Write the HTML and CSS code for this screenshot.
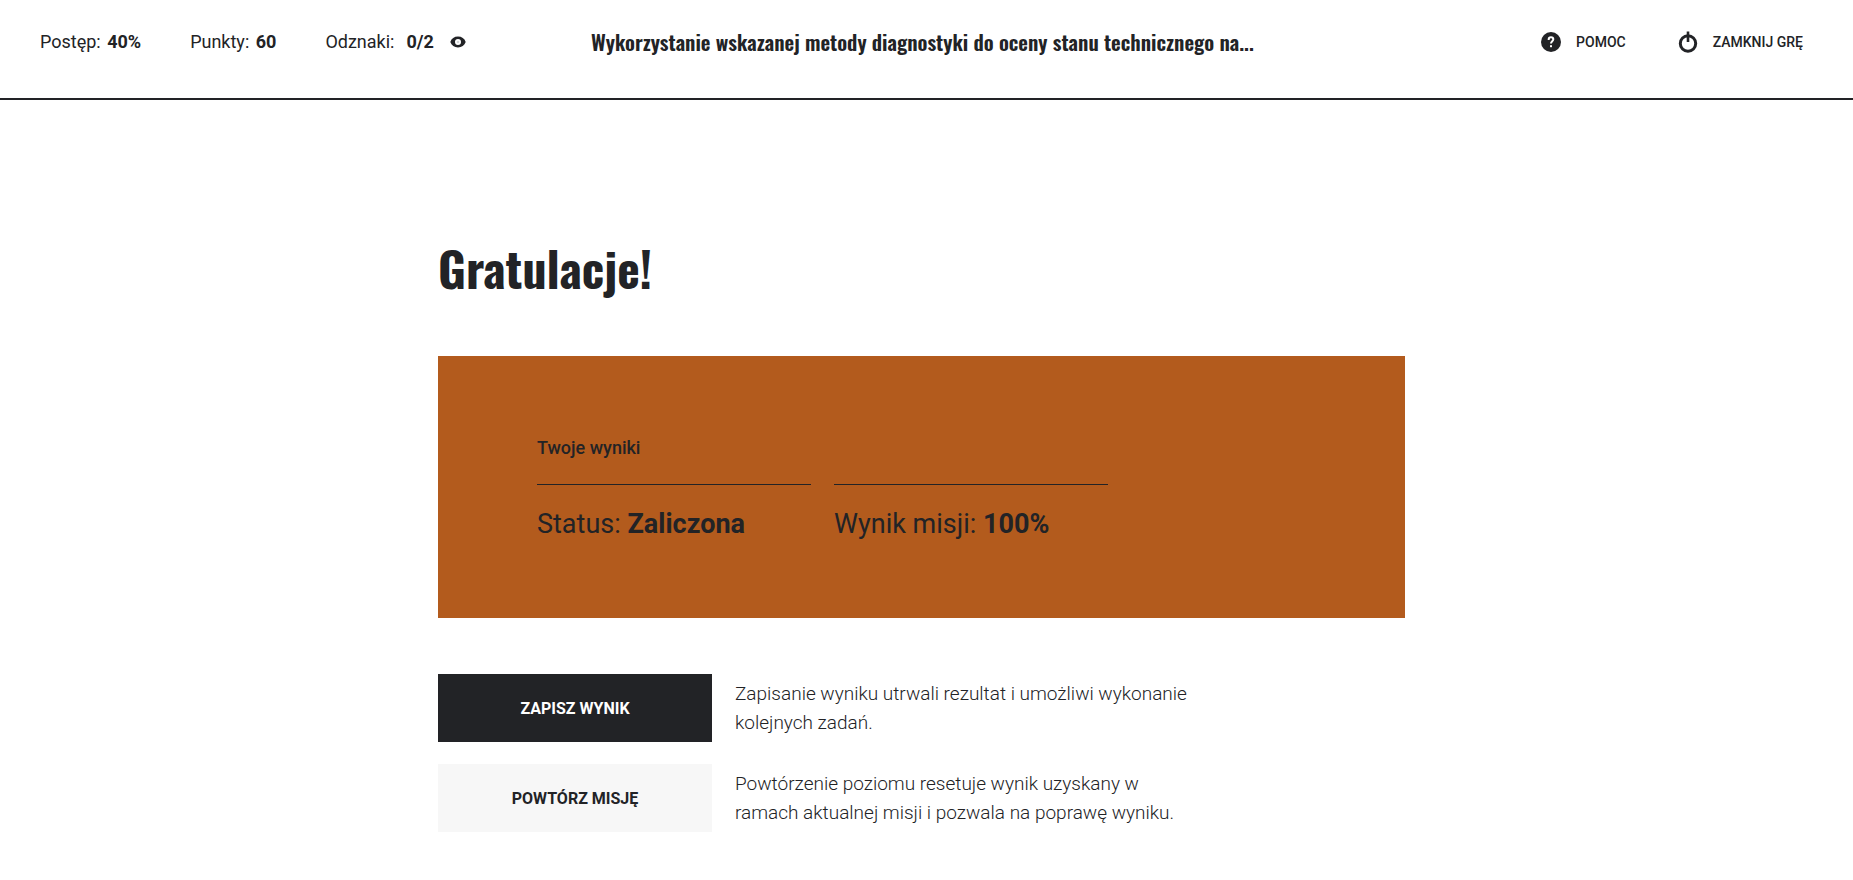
FILE: index.html
```html
<!DOCTYPE html>
<html lang="pl">
<head>
  <meta charset="UTF-8">
  <meta name="viewport" content="width=device-width, initial-scale=1.0">
  <title>Gratulacje!</title>
  <link rel="stylesheet" href="styles.css">
</head>
<body>
  <header class="top-bar">
    <ul class="stats">
      <li>Postęp: <strong>40%</strong></li>
      <li>Punkty: <strong>60</strong></li>
      <li class="badges">
        Odznaki: <strong>0/2</strong>
        <button class="icon-btn" type="button" aria-label="Pokaż odznaki">
          <svg width="16" height="12" viewBox="0 0 16 12">
            <path fill="currentColor" fill-rule="evenodd" d="M8 0.6C4.3 0.6 1.5 2.6 0.3 6c1.2 3.4 4 5.4 7.7 5.4s6.5-2 7.7-5.4C14.5 2.6 11.7 0.6 8 0.6zM8 3a3 3 0 1 1 0 6a3 3 0 1 1 0-6z"/>
            <circle cx="8" cy="6" r="1.3" fill="#d5d8da"/>
          </svg>
        </button>
      </li>
    </ul>

    <h2 class="mission-title">Wykorzystanie wskazanej metody diagnostyki do oceny stanu technicznego na...</h2>

    <nav class="actions">
      <button class="nav-btn" type="button">
        <svg width="20" height="20" viewBox="0 0 20 20">
          <circle cx="10" cy="10" r="10" fill="currentColor"/>
          <path d="M7.7 8V7.3a2.3 2.1 0 0 1 4.6 0c0 1.9-2.3 1.9-2.3 4.3" fill="none" stroke="#fff" stroke-width="2"/>
          <rect x="9" y="13.2" width="2" height="2" fill="#fff"/>
        </svg>
        POMOC
      </button>
      <button class="nav-btn" type="button">
        <svg width="20" height="22" viewBox="0 0 20 22">
          <circle cx="10" cy="12.5" r="7.7" fill="none" stroke="currentColor" stroke-width="3"/>
          <path d="M10 0.5v10.5" stroke="currentColor" stroke-width="2.6"/>
        </svg>
        ZAMKNIJ GRĘ
      </button>
    </nav>
  </header>

  <main class="content">
    <h1>Gratulacje!</h1>

    <section class="results">
      <h3>Twoje wyniki</h3>
      <div class="results-row">
        <p>Status: <strong>Zaliczona</strong></p>
        <p>Wynik misji: <strong>100%</strong></p>
      </div>
    </section>

    <div class="options">
      <div class="option">
        <button class="btn btn-dark" type="button" aria-describedby="saveInfo">ZAPISZ WYNIK</button>
        <p id="saveInfo">Zapisanie wyniku utrwali rezultat i umożliwi wykonanie kolejnych zadań.</p>
      </div>
      <div class="option">
        <button class="btn btn-light" type="button" aria-describedby="repeatInfo">POWTÓRZ MISJĘ</button>
        <p id="repeatInfo">Powtórzenie poziomu resetuje wynik uzyskany w ramach aktualnej misji i pozwala na poprawę wyniku.</p>
      </div>
    </div>
  </main>
</body>
</html>
```

FILE: styles.css
```css
* {
  box-sizing: border-box;
}

body {
  margin: 0;
  font-family: Roboto, sans-serif;
  font-size: 18px;
  color: #222326;
  background: #fff;
}

h1, h2, h3, p, ul {
  margin: 0;
  padding: 0;
}

strong {
  font-weight: 700;
}

button {
  font-family: inherit;
  color: inherit;
  border: none;
  cursor: pointer;
}

/* Top bar */
.top-bar {
  display: grid;
  grid-template-columns: 551px 1fr auto;
  align-items: center;
  padding: 24px 50px 38px 40px;
  border-bottom: 2px solid #222326;
}

.stats {
  display: flex;
  gap: 49px;
  list-style: none;
  line-height: 36px;
}

.stats strong {
  margin-left: 2px;
}

.badges {
  display: flex;
  align-items: center;
}

.badges strong {
  margin-left: 12px;
}

.icon-btn {
  display: flex;
  margin-left: 16px;
  padding: 0;
  background: none;
}

.mission-title {
  font-family: Oswald, "Roboto Condensed", Roboto, sans-serif;
  font-size: 21px;
  font-weight: 600;
  line-height: 36px;
  white-space: nowrap;
}

.actions {
  display: flex;
  gap: 52px;
}

.nav-btn {
  display: flex;
  align-items: center;
  gap: 15px;
  padding: 0;
  font-size: 14px;
  font-weight: 500;
  background: none;
}

/* Content */
.content {
  width: 977px;
  max-width: 100%;
  margin: 0 auto;
  padding: 130px 10px 32px 0;
}

h1 {
  font-family: Oswald, "Roboto Condensed", Roboto, sans-serif;
  font-size: 48px;
  line-height: 76px;
  margin-bottom: 50px;
}

.results {
  padding: 80px 99px 76px;
  background: #b35b1d;
}

.results h3 {
  font-size: 18px;
  font-weight: 500;
  line-height: 24px;
  margin-bottom: 24px;
}

.results-row {
  display: grid;
  grid-template-columns: 274px 274px;
  gap: 23px;
}

.results-row p {
  padding-top: 21px;
  border-top: 1px solid #222326;
  font-size: 27px;
  font-weight: 400;
  line-height: 36px;
}

/* Buttons with descriptions */
.options {
  display: flex;
  flex-direction: column;
  gap: 22px;
  margin-top: 56px;
}

.option {
  display: grid;
  grid-template-columns: 274px 460px;
  gap: 23px;
  align-items: center;
}

.option p {
  font-size: 19px;
  font-weight: 300;
  line-height: 29px;
}

.btn {
  height: 68px;
  font-size: 16px;
  font-weight: 700;
}

.btn-dark {
  background: #222326;
  color: #fff;
}

.btn-light {
  background: #f7f7f7;
}
```
